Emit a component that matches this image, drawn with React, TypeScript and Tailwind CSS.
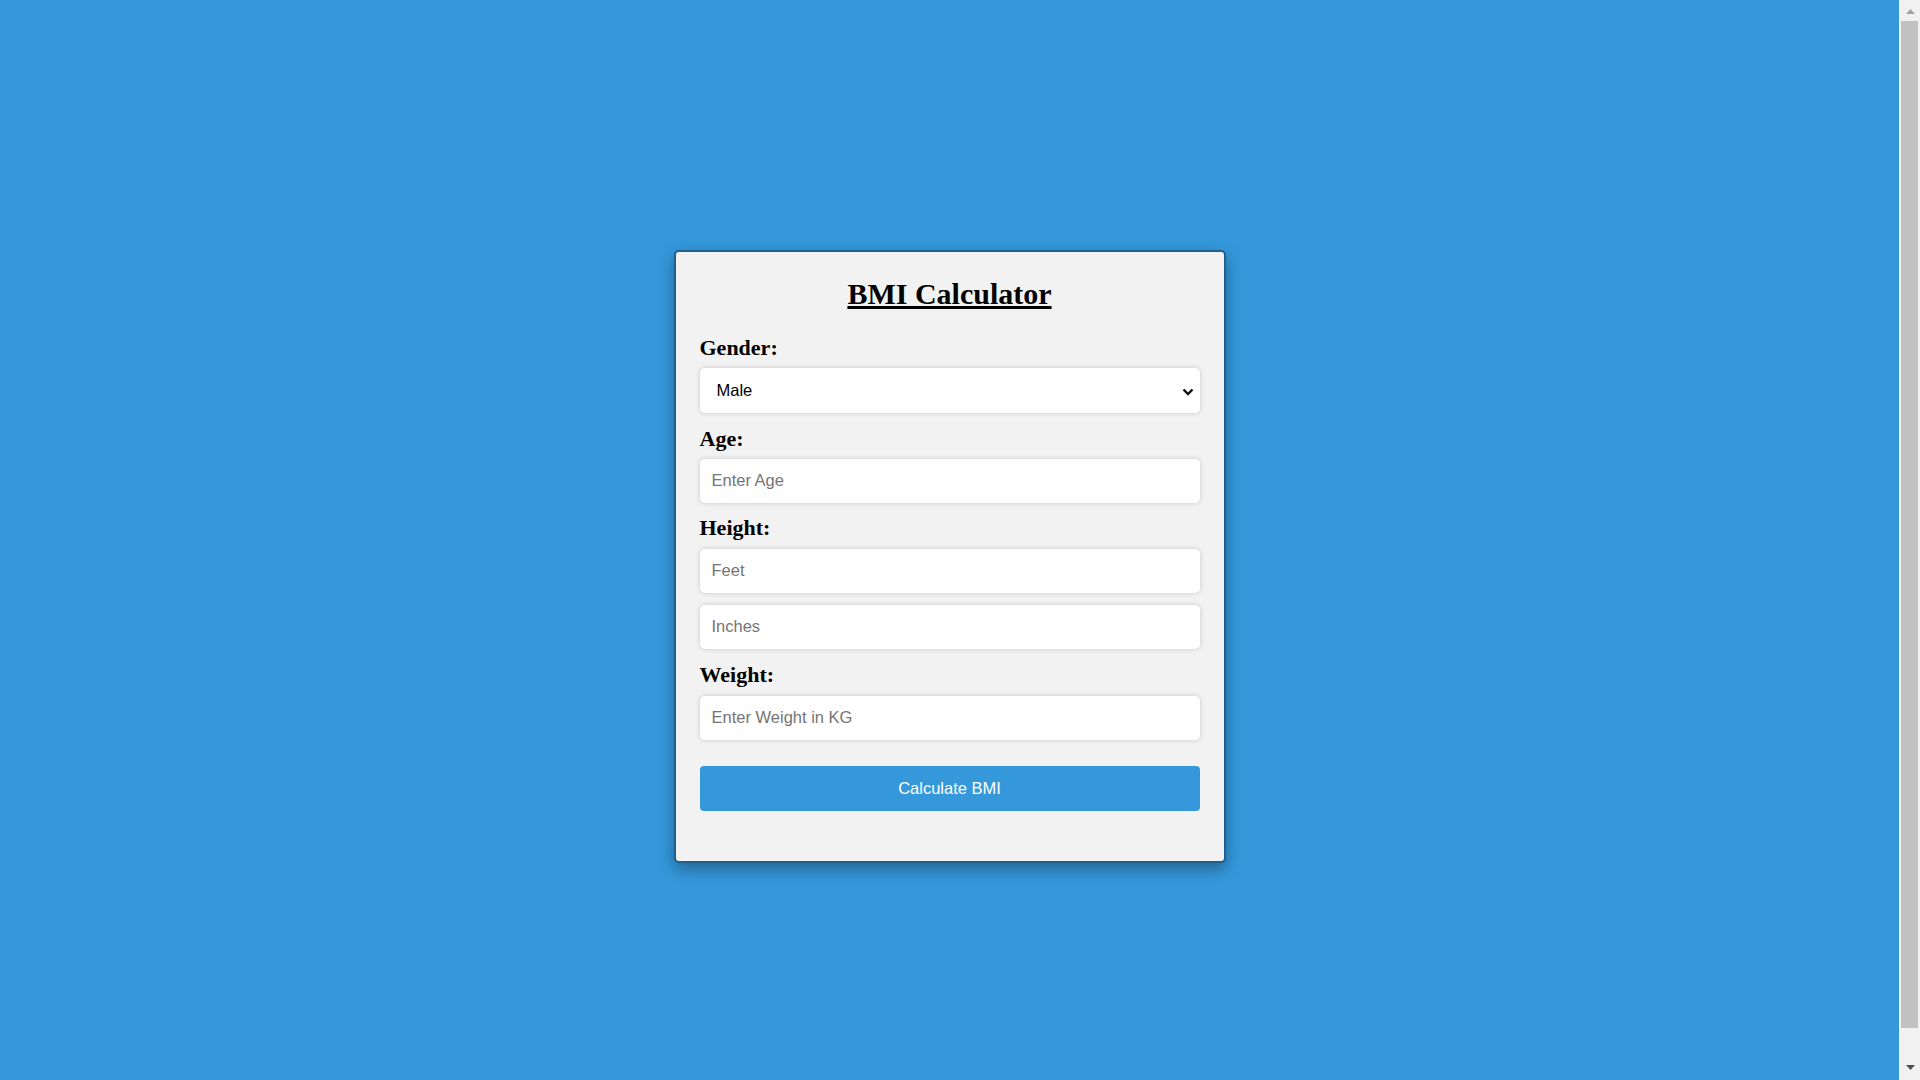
import React, { useState } from 'react';

const labelClass = 'block text-[22px] leading-[24px] font-bold text-black';
const inputClass =
  'block w-full h-[44px] px-3 rounded-[5px] bg-white text-[16.5px] text-black outline-none shadow-[0_0_5px_rgba(0,0,0,0.18)] placeholder:text-[#757575]';
const sans = { fontFamily: '"Liberation Sans", Arial, sans-serif' };

const Scrollbar = () => (
  <div className="w-[21px] h-full flex flex-col bg-[#f1f1f1]">
    <div className="h-[21px] flex justify-center pt-[9px] pl-[1px]">
      <svg width="9" height="5" viewBox="0 0 9 5">
        <path d="M4.5 0 L9 5 L0 5 Z" fill="#a3a3a3" />
      </svg>
    </div>
    <div className="h-[1007px] mx-[2px] bg-[#c1c1c1]" />
    <div className="flex-1" />
    <div className="h-[21px] flex justify-center pt-[6px] pl-[1px]">
      <svg width="9" height="5" viewBox="0 0 9 5">
        <path d="M0 0 L9 0 L4.5 5 Z" fill="#505050" />
      </svg>
    </div>
  </div>
);

export default function App() {
  const [gender, setGender] = useState('male');
  const [age, setAge] = useState('');
  const [feet, setFeet] = useState('');
  const [inches, setInches] = useState('');
  const [weight, setWeight] = useState('');

  return (
    <div className="h-screen flex overflow-hidden bg-[#3498db]">
      <div className="flex-1 flex items-center justify-center pt-[32px]">
        <div
          className="w-[552px] px-6 pt-[25px] pb-[50px] bg-[#f2f2f2] border-2 border-[#215f8c] rounded-[5px] shadow-[0_6px_16px_rgba(0,0,0,0.35)]"
          style={{ fontFamily: '"Liberation Serif", "Times New Roman", serif' }}
        >
          <h1 className="text-center text-[30px] leading-[33px] font-bold underline text-black">
            BMI Calculator
          </h1>

          <form className="flex flex-col" onSubmit={(e) => e.preventDefault()}>
            <label className={`${labelClass} mt-[26px]`}>Gender:</label>
            <div className="relative mt-2">
              <select
                value={gender}
                onChange={(e) => setGender(e.target.value)}
                className="block w-full h-[45px] pl-[17px] pr-8 appearance-none rounded-[5px] bg-white text-[16.5px] text-black outline-none shadow-[0_0_5px_rgba(0,0,0,0.18)]"
                style={sans}
              >
                <option value="male">Male</option>
                <option value="female">Female</option>
              </select>
              <svg
                className="absolute right-[6px] top-[20px] pointer-events-none"
                width="12"
                height="8"
                viewBox="0 0 12 8"
                fill="none"
              >
                <path d="M1.5 1.5 L6 6 L10.5 1.5" stroke="#111" strokeWidth="2.4" />
              </svg>
            </div>

            <label className={`${labelClass} mt-[14px]`}>Age:</label>
            <input
              type="number"
              placeholder="Enter Age"
              value={age}
              onChange={(e) => setAge(e.target.value)}
              className={`${inputClass} mt-2`}
              style={sans}
            />

            <label className={`${labelClass} mt-[13px]`}>Height:</label>
            <input
              type="number"
              placeholder="Feet"
              value={feet}
              onChange={(e) => setFeet(e.target.value)}
              className={`${inputClass} mt-[9px]`}
              style={sans}
            />
            <input
              type="number"
              placeholder="Inches"
              value={inches}
              onChange={(e) => setInches(e.target.value)}
              className={`${inputClass} mt-3`}
              style={sans}
            />

            <label className={`${labelClass} mt-[14px]`}>Weight:</label>
            <input
              type="number"
              placeholder="Enter Weight in KG"
              value={weight}
              onChange={(e) => setWeight(e.target.value)}
              className={`${inputClass} mt-[9px]`}
              style={sans}
            />

            <button
              type="submit"
              className="mt-[26px] h-[45px] w-full rounded-[4px] bg-[#3498db] text-white text-[16.5px]"
              style={sans}
            >
              Calculate BMI
            </button>
          </form>
        </div>
      </div>
      <Scrollbar />
    </div>
  );
}
